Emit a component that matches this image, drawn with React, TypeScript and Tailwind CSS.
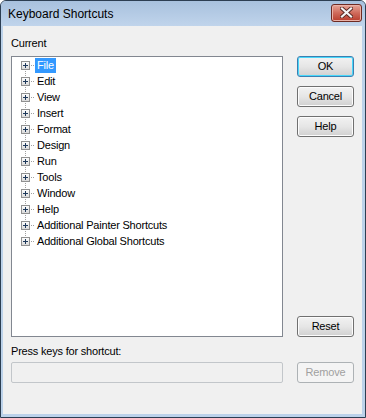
import React from 'react';

const items = ['File', 'Edit', 'View', 'Insert', 'Format', 'Design', 'Run', 'Tools', 'Window', 'Help', 'Additional Painter Shortcuts', 'Additional Global Shortcuts'];

function Expander({ first, last }: { first: boolean; last: boolean }) {
  return (
    <svg width="23" height="16" viewBox="0 0 23 16" className="shrink-0" shapeRendering="crispEdges">
      <defs>
        <linearGradient id="boxfill" x1="0" y1="0" x2="0" y2="1">
          <stop offset="0" stopColor="#ffffff" />
          <stop offset="1" stopColor="#d8d8d8" />
        </linearGradient>
      </defs>
      {!first && (
        <>
          <rect x="13" y="0" width="1" height="1" fill="#a0a0a0" />
          <rect x="13" y="2" width="1" height="1" fill="#a0a0a0" />
        </>
      )}
      {!last && <rect x="13" y="14" width="1" height="1" fill="#a0a0a0" />}
      <rect x="9.5" y="4.5" width="8" height="8" fill="url(#boxfill)" stroke="#919191" />
      <rect x="11" y="8" width="5" height="1" fill="#1e395b" />
      <rect x="13" y="6" width="1" height="5" fill="#1e395b" />
      <rect x="19" y="8" width="1" height="1" fill="#a0a0a0" />
      <rect x="21" y="8" width="1" height="1" fill="#a0a0a0" />
    </svg>
  );
}

function Button({ label, primary, disabled, className = '' }: { label: string; primary?: boolean; disabled?: boolean; className?: string }) {
  const base = 'w-[57px] h-[21px] rounded-[3px] flex items-center justify-center text-[11px] tracking-[-0.2px]';
  if (disabled) {
    return <div className={`${base} border border-[#adb2b5] bg-[#f4f4f4] text-[#a0a0a0] ${className}`}>{label}</div>;
  }
  if (primary) {
    return (
      <div className={`${base} border border-[#3c7fb1] bg-gradient-to-b from-[#f2f2f2] via-[#e6e6e6] to-[#d0d0d0] shadow-[inset_0_0_0_1px_#48d8fb] text-black ${className}`}>
        {label}
      </div>
    );
  }
  return (
    <div className={`${base} border border-[#707070] bg-gradient-to-b from-[#f2f2f2] via-[#e6e6e6] to-[#d0d0d0] shadow-[inset_0_0_0_1px_#fcfcfc] text-black ${className}`}>
      {label}
    </div>
  );
}

export default function App() {
  return (
    <div className="w-[366px] h-[418px] flex flex-col rounded-t-[6px] border border-[#2c3e52] bg-[#bcd2ea] overflow-hidden font-['Liberation_Sans',Arial,sans-serif] text-black select-none">
      {/* Title bar */}
      <div className="h-[25px] shrink-0 flex items-center justify-between pl-[7px] pr-[3px] bg-gradient-to-b from-[#a8c1de] to-[#c0d4eb]">
        <span className="text-[12px] leading-none">Keyboard Shortcuts</span>
        <div className="w-[31px] h-[18px] mb-[2px] rounded-[3px] border border-[#6e2a22] bg-gradient-to-b from-[#e6a497] via-[#cf6a5b] to-[#b83c2c] shadow-[inset_0_0_0_1px_#eab2a8] flex items-center justify-center">
          <svg width="13" height="11" viewBox="0 0 13 11">
            <path d="M2 1.5 L11 9.5 M11 1.5 L2 9.5" stroke="#5a2a24" strokeWidth="4" strokeLinecap="square" />
            <path d="M2 1.5 L11 9.5 M11 1.5 L2 9.5" stroke="#f4f4f4" strokeWidth="2.2" strokeLinecap="square" />
          </svg>
        </div>
      </div>

      {/* Client area */}
      <div className="flex-1 ml-[2px] mr-[3px] mb-[3px] bg-[#f0f0f0] flex flex-col px-[8px] pt-[11px] text-[11px] tracking-[-0.2px]">
        <div className="leading-[13px]">Current</div>
        <div className="flex mt-[6px]">
          <div className="w-[272px] h-[281px] border border-[#828790] bg-white">
            {items.map((it, i) => (
              <div key={it} className="h-[16px] flex items-center">
                <Expander first={i === 0} last={i === items.length - 1} />
                <span className={`px-[2px] leading-[15px] whitespace-nowrap ${i === 0 ? 'bg-[#3399ff] text-white' : ''}`}>{it}</span>
              </div>
            ))}
          </div>
          <div className="ml-[14px] flex flex-col gap-[9px]">
            <Button label="OK" primary />
            <Button label="Cancel" />
            <Button label="Help" />
            <Button label="Reset" className="mt-auto" />
          </div>
        </div>
        <div className="leading-[13px] mt-[8px]">Press keys for shortcut:</div>
        <div className="flex mt-[4px]">
          <div className="w-[272px] h-[21px] rounded-[2px] border border-[#c2c6ca] bg-[#f0f0f0]" />
          <Button label="Remove" disabled className="ml-[14px]" />
        </div>
      </div>
    </div>
  );
}
